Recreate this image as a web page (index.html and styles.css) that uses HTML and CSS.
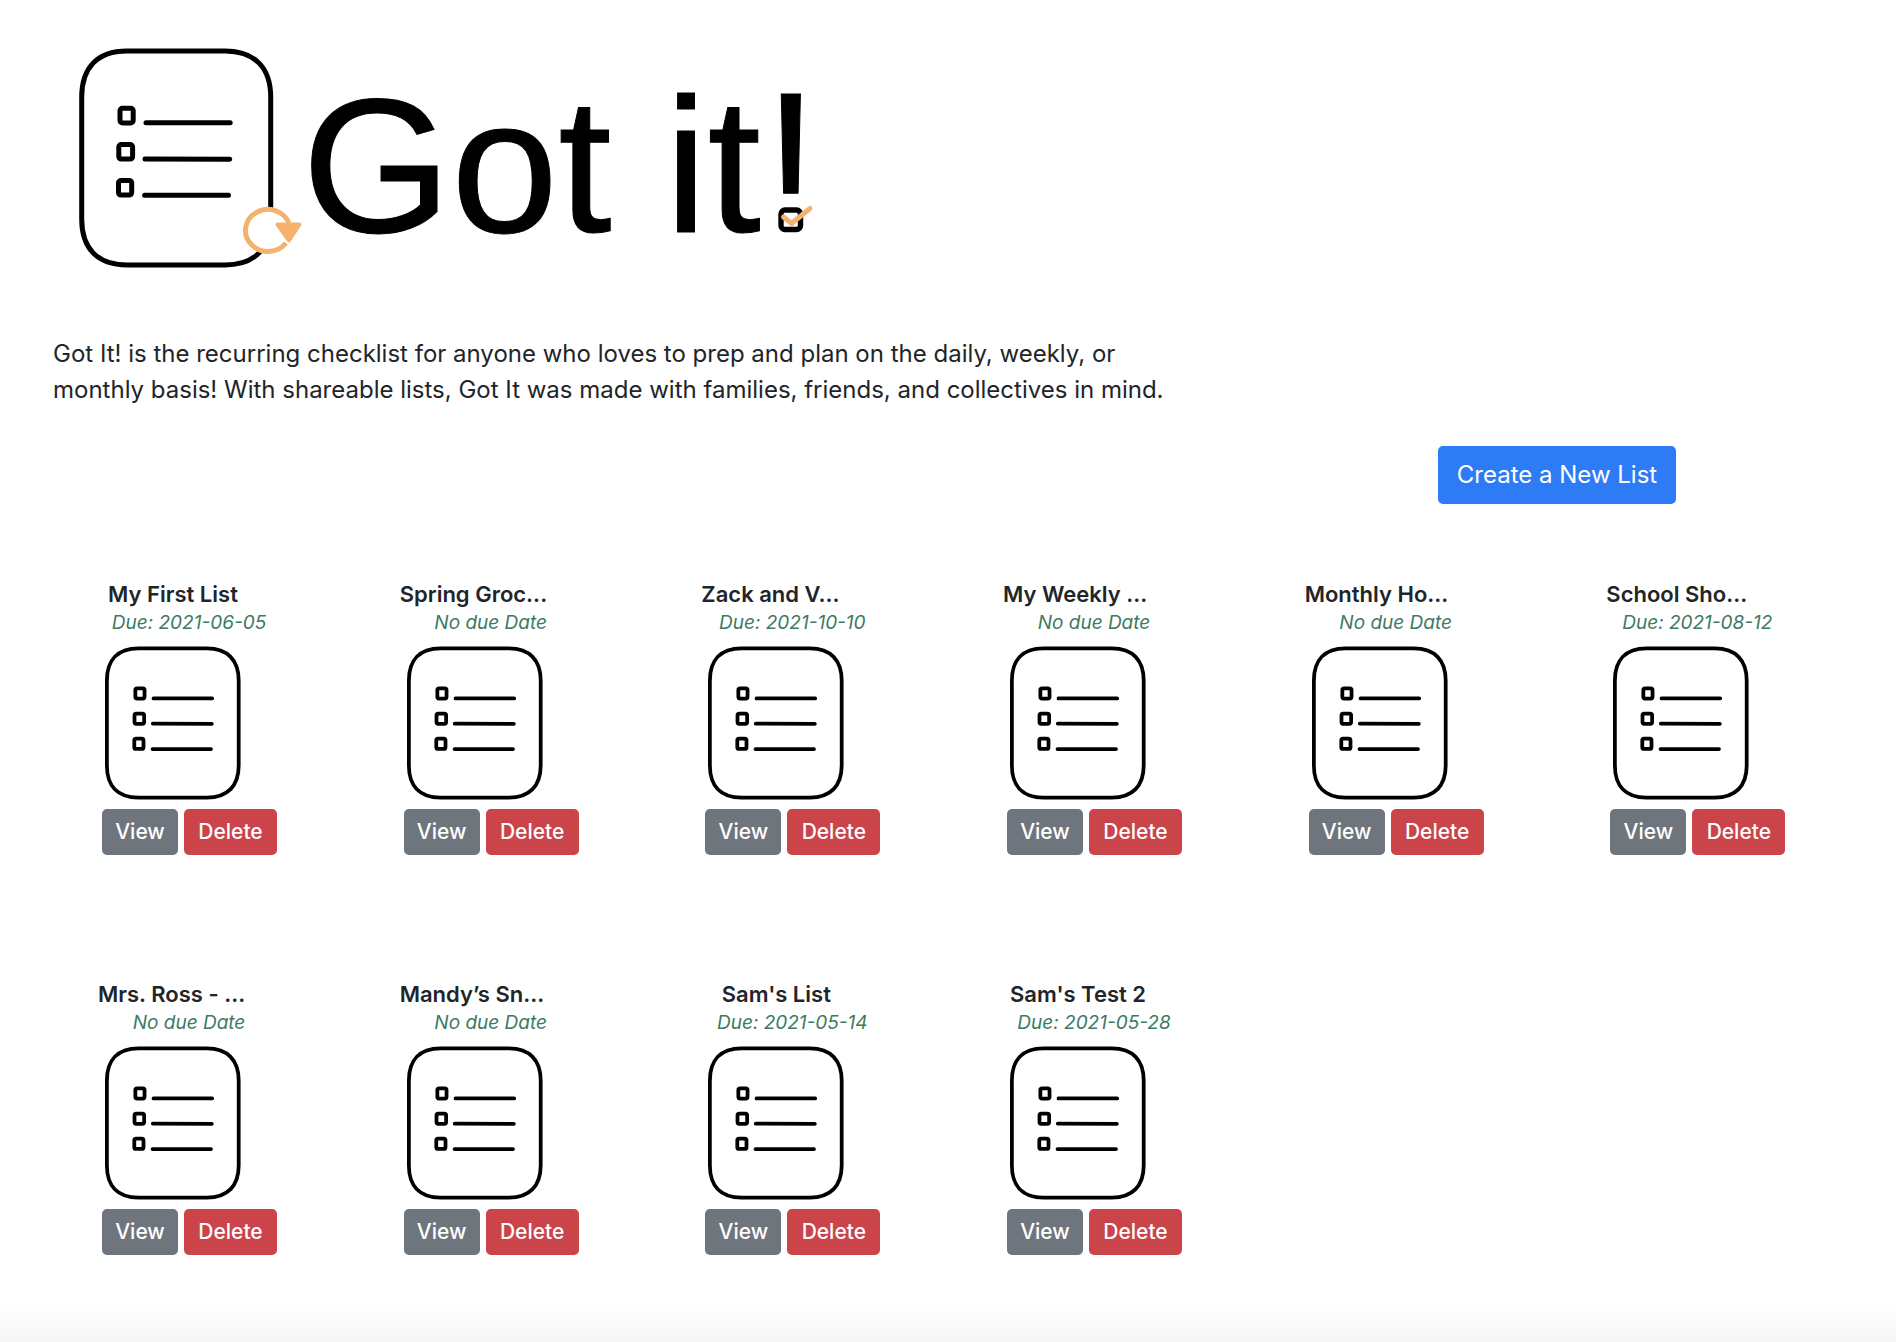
FILE: index.html
```html
<!DOCTYPE html>
<html lang="en">
<head>
<meta charset="utf-8">
<meta name="viewport" content="width=device-width, initial-scale=1">
<title>Got it!</title>
<link rel="stylesheet" href="styles.css">
</head>
<body>
<svg class="sprite" aria-hidden="true">
  <defs>
    <path id="outline" d="M127 51H225C255 51 270.700 68 270.700 97V219C270.700 248 255 265 225 265H127C97 265 81.700 248 81.700 219V97C81.700 68 97 51 127 51Z"/>
    <g id="rows">
      <rect x="120" y="108.300" width="13.200" height="14.600" rx="2.500"/>
      <rect x="118.800" y="144.500" width="13.800" height="14.600" rx="2.500"/>
      <rect x="118.500" y="180.500" width="13.200" height="14.600" rx="2.500"/>
      <path d="M146 122.700H230.200M145 158.900L229.700 159.200M144.600 195.300H228.500"/>
    </g>
  </defs>
  <symbol id="checklist" viewBox="79 48 195 220">
    <g fill="none" stroke="#000" stroke-width="5" stroke-linecap="round">
      <use href="#outline"/>
      <use href="#rows"/>
    </g>
  </symbol>
  <symbol id="checklist-small" viewBox="79 48 195 220">
    <g fill="none" stroke="#000" stroke-width="5.400" stroke-linecap="round">
      <use href="#outline"/>
      <use href="#rows" x="2.500"/>
    </g>
  </symbol>
</svg>
<div class="page">
  <header class="brand">
    <svg class="logo" viewBox="70 40 760 240" role="img" aria-label="Got it!">
      <use href="#checklist" x="79" y="48" width="195" height="220"/>
      <path d="M289 223A22.500 21 0 1 0 286 243" fill="#fff" stroke="#f4b26e" stroke-width="5"/>
      <path d="M277.500 224.500H299.500L289 240.500Z" fill="#f4b26e" stroke="#f4b26e" stroke-width="4" stroke-linejoin="round"/>
      <text class="wordmark" x="302" y="232">Got it<tspan class="mark" x="763">!</tspan></text>
      <rect x="772" y="199" width="40" height="36" fill="#fff"/>
      <rect x="781" y="210" width="19.500" height="19.500" rx="4" fill="none" stroke="#000" stroke-width="5.400"/>
      <path d="M783.500 217L791.500 223.500L810 208.500" fill="none" stroke="#f4b26e" stroke-width="5" stroke-linecap="round" stroke-linejoin="round"/>
    </svg>
  </header>
  <p class="intro">Got It! is the recurring checklist for anyone who loves to prep and plan on the daily, weekly, or<br>monthly basis! With shareable lists, Got It was made with families, friends, and collectives in mind.</p>
  <div class="actions"><button class="btn btn-primary" type="button">Create a New List</button></div>
  <main class="lists">
    <article class="card"><h2 class="title">My First List</h2><p class="due">Due: 2021-06-05</p><svg class="icon"><use href="#checklist-small"/></svg><div class="buttons"><button class="btn btn-view" type="button">View</button><button class="btn btn-delete" type="button">Delete</button></div></article>
    <article class="card"><h2 class="title long">Spring Groc...</h2><p class="due">No due Date</p><svg class="icon"><use href="#checklist-small"/></svg><div class="buttons"><button class="btn btn-view" type="button">View</button><button class="btn btn-delete" type="button">Delete</button></div></article>
    <article class="card"><h2 class="title long">Zack and V...</h2><p class="due">Due: 2021-10-10</p><svg class="icon"><use href="#checklist-small"/></svg><div class="buttons"><button class="btn btn-view" type="button">View</button><button class="btn btn-delete" type="button">Delete</button></div></article>
    <article class="card"><h2 class="title long">My Weekly ...</h2><p class="due">No due Date</p><svg class="icon"><use href="#checklist-small"/></svg><div class="buttons"><button class="btn btn-view" type="button">View</button><button class="btn btn-delete" type="button">Delete</button></div></article>
    <article class="card"><h2 class="title long">Monthly Ho...</h2><p class="due">No due Date</p><svg class="icon"><use href="#checklist-small"/></svg><div class="buttons"><button class="btn btn-view" type="button">View</button><button class="btn btn-delete" type="button">Delete</button></div></article>
    <article class="card"><h2 class="title long">School Sho...</h2><p class="due">Due: 2021-08-12</p><svg class="icon"><use href="#checklist-small"/></svg><div class="buttons"><button class="btn btn-view" type="button">View</button><button class="btn btn-delete" type="button">Delete</button></div></article>
    <article class="card"><h2 class="title long">Mrs. Ross - ...</h2><p class="due">No due Date</p><svg class="icon"><use href="#checklist-small"/></svg><div class="buttons"><button class="btn btn-view" type="button">View</button><button class="btn btn-delete" type="button">Delete</button></div></article>
    <article class="card"><h2 class="title long">Mandy’s Sn...</h2><p class="due">No due Date</p><svg class="icon"><use href="#checklist-small"/></svg><div class="buttons"><button class="btn btn-view" type="button">View</button><button class="btn btn-delete" type="button">Delete</button></div></article>
    <article class="card"><h2 class="title">Sam's List</h2><p class="due">Due: 2021-05-14</p><svg class="icon"><use href="#checklist-small"/></svg><div class="buttons"><button class="btn btn-view" type="button">View</button><button class="btn btn-delete" type="button">Delete</button></div></article>
    <article class="card"><h2 class="title">Sam's Test 2</h2><p class="due">Due: 2021-05-28</p><svg class="icon"><use href="#checklist-small"/></svg><div class="buttons"><button class="btn btn-view" type="button">View</button><button class="btn btn-delete" type="button">Delete</button></div></article>
  </main>
  <div class="fade"></div>
</div>
</body>
</html>
```
FILE: styles.css
```css
* { box-sizing: border-box; }
body {
  margin: 0;
  background: #fff;
  color: #212529;
  font-family: Inter, "Liberation Sans", sans-serif;
}
.sprite { display: block; width: 0; height: 0; }
.page {
  min-height: 100vh;
  display: flex;
  flex-direction: column;
}
.brand { padding: 40px 70px 0; }
.logo { display: block; width: 760px; height: 240px; }
.wordmark {
  font-family: "Liberation Sans", Arial, sans-serif;
  font-size: 192px;
  stroke: #000;
  stroke-width: 1px;
}
.mark { font-size: 200px; }
.intro {
  margin: 56px 53px 38px;
  font-size: 24px;
  line-height: 36px;
}
.actions {
  display: flex;
  justify-content: flex-end;
  padding-right: 220px;
}
.btn {
  height: 46px;
  padding: 0;
  border: 0;
  border-radius: 5px;
  color: #fff;
  font: 500 21px/30px Inter, "Liberation Sans", sans-serif;
  cursor: pointer;
}
.btn-primary {
  width: 238px;
  height: 58px;
  background: #2d7cf6;
  font-size: 24px;
  font-weight: 400;
}
.lists {
  display: grid;
  grid-template-columns: repeat(6, 1fr);
  row-gap: 124px;
  padding: 75px 43px 0;
}
.card { padding-left: 55px; }
.title {
  width: 150px;
  margin: 0;
  font-size: 22px;
  font-weight: 600;
  line-height: 30px;
  text-align: center;
  white-space: nowrap;
}
.long { text-align: left; }
.due {
  width: 182px;
  margin: 0;
  color: #3d7a62;
  font-size: 19px;
  font-style: italic;
  line-height: 28px;
  text-align: center;
}
.icon {
  display: block;
  width: 136px;
  height: 154px;
  margin: 9px 0 9px 7px;
}
.buttons {
  display: flex;
  gap: 6px;
  padding-left: 4px;
}
.btn-view { width: 76px; background: #6f757d; }
.btn-delete { width: 93px; background: #cb444a; }
.fade {
  height: 37px;
  margin-top: auto;
  background: linear-gradient(#fff, #f6f6f6);
}
```
